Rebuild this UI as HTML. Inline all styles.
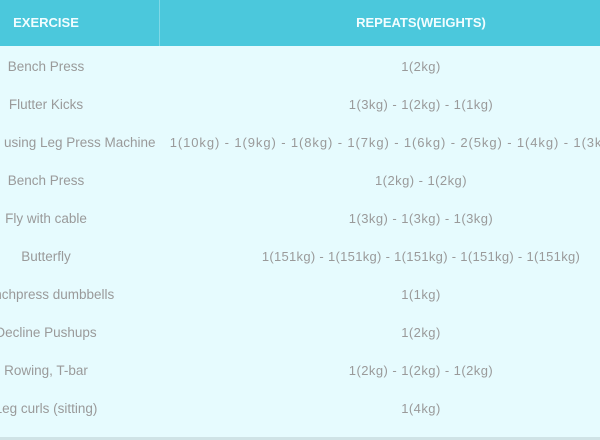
<!DOCTYPE html>
<html><head><style>
body{margin:0;width:600px;height:440px;overflow:hidden;background:#e6fbfe;font-family:"Liberation Sans",sans-serif;position:relative}
.hd{position:absolute;left:0;top:0;width:600px;height:46px;background:#4bc8dc}
.dv{position:absolute;left:159px;top:0;width:1px;height:46px;background:#7fd8e6}
.c{position:absolute;white-space:nowrap;text-align:center;font-size:13px;color:#9a9a9a;line-height:16px}
.l{left:-154px;width:400px;font-size:13.5px}
.r{left:-41px;width:924px;letter-spacing:0.45px}
.h{color:#f2fdff;font-weight:bold;font-size:13px;top:15px;letter-spacing:0}
.bt{position:absolute;left:0;top:437px;width:600px;height:3px;background:#cfe3e6}
</style></head><body>
<div class="hd"></div><div class="dv"></div>
<div class="c l h">EXERCISE</div><div class="c r h">REPEATS(WEIGHTS)</div>
<div class="c l" style="top:59px">Bench Press</div><div class="c r" style="top:59px">1(2kg)</div>
<div class="c l" style="top:97px">Flutter Kicks</div><div class="c r" style="top:97px">1(3kg) - 1(2kg) - 1(1kg)</div>
<div class="c l" style="top:135px">Calf raises using Leg Press Machine</div><div class="c r" style="top:135px;letter-spacing:0.9px">1(10kg) - 1(9kg) - 1(8kg) - 1(7kg) - 1(6kg) - 2(5kg) - 1(4kg) - 1(3kg) - 1(2kg)</div>
<div class="c l" style="top:173px">Bench Press</div><div class="c r" style="top:173px">1(2kg) - 1(2kg)</div>
<div class="c l" style="top:211px">Fly with cable</div><div class="c r" style="top:211px">1(3kg) - 1(3kg) - 1(3kg)</div>
<div class="c l" style="top:249px">Butterfly</div><div class="c r" style="top:249px;letter-spacing:0.3px">1(151kg) - 1(151kg) - 1(151kg) - 1(151kg) - 1(151kg)</div>
<div class="c l" style="top:287px">Benchpress dumbbells</div><div class="c r" style="top:287px">1(1kg)</div>
<div class="c l" style="top:325px">Decline Pushups</div><div class="c r" style="top:325px">1(2kg)</div>
<div class="c l" style="top:363px">Rowing, T-bar</div><div class="c r" style="top:363px">1(2kg) - 1(2kg) - 1(2kg)</div>
<div class="c l" style="top:401px">Leg curls (sitting)</div><div class="c r" style="top:401px">1(4kg)</div>
<div class="bt"></div>
</body></html>
